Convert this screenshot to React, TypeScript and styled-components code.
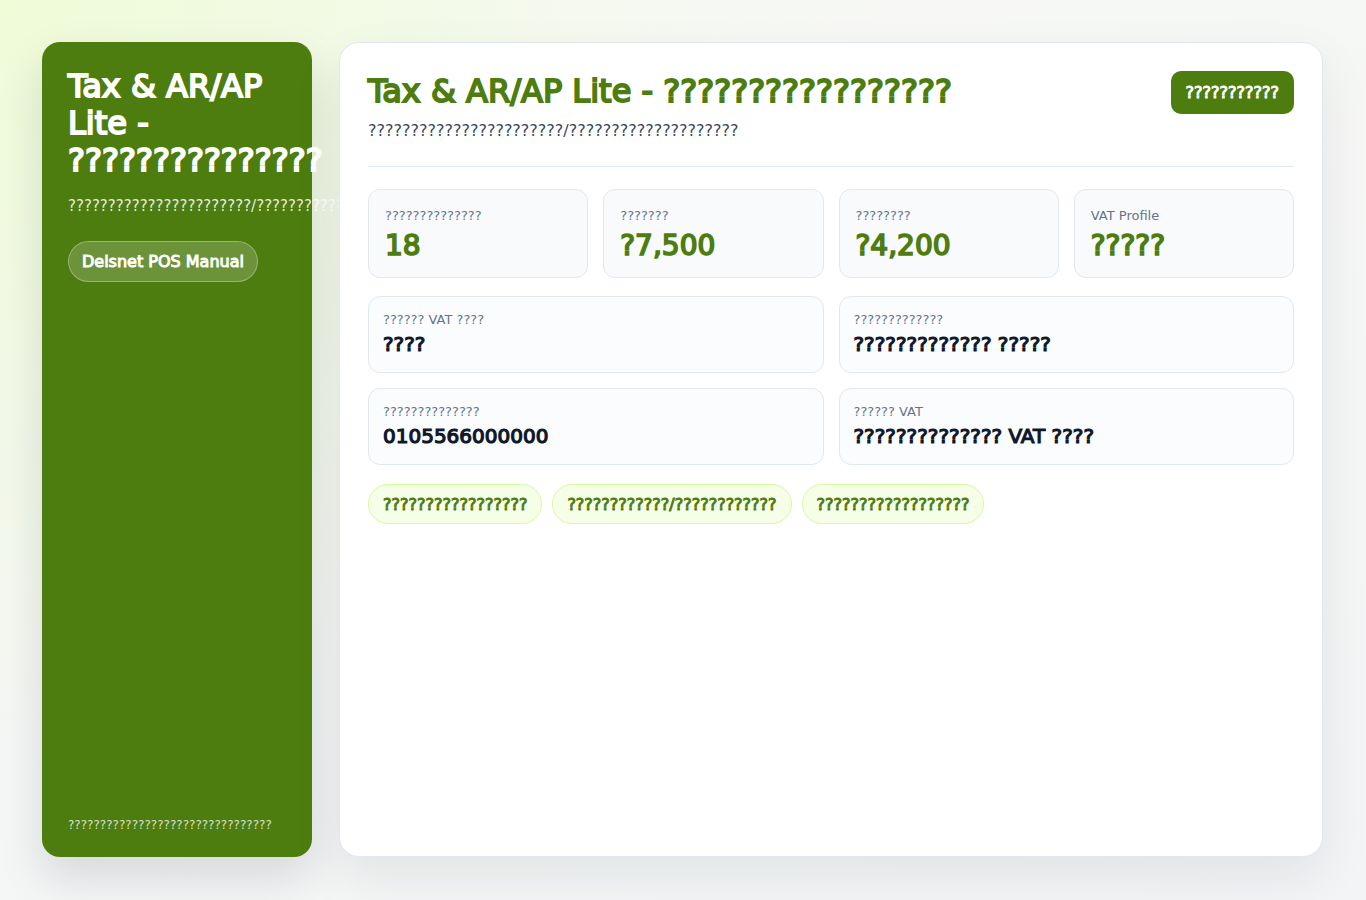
import React from "react";
import styled, { createGlobalStyle, css } from "styled-components";

const Global = createGlobalStyle`
  * { box-sizing: border-box; }
  html, body { margin: 0; padding: 0; }
  body {
    font-family: "DejaVu Sans", "Noto Sans", sans-serif;
    background:
      radial-gradient(circle at 0% 0%, rgba(236, 252, 203, 0.7) 0%, rgba(236, 252, 203, 0) 45%),
      linear-gradient(160deg, #f7f9f4 0%, #f3f4f6 100%);
    min-height: 900px;
  }
`;

/* heavy weight drawn on the regular face, as in the reference */
const heavy = css`
  font-weight: 400;
  -webkit-text-stroke: 0.06em currentColor;
`;

const Page = styled.div`
  display: flex;
  gap: 27px;
  padding: 42px 43px 43px 42px;
  height: 900px;
`;

const Sidebar = styled.aside`
  width: 270px;
  flex: none;
  background: #4d7c0f;
  border-radius: 18px;
  padding: 26px 26px 23px;
  display: flex;
  flex-direction: column;
  color: #fff;
  box-shadow: 0 20px 45px rgba(15, 23, 42, 0.13);
`;

const SideTitle = styled.h1`
  margin: 0;
  font-size: 32px;
  line-height: 37px;
  ${heavy};
`;

const SideSub = styled.p`
  margin: 16px 0 0;
  width: 271px;
  overflow: hidden;
  font-size: 15px;
  line-height: 22px;
  color: rgba(255, 255, 255, 0.88);
  white-space: nowrap;
`;

const PillLink = styled.a`
  margin-top: 24px;
  align-self: flex-start;
  padding: 0 13px;
  height: 41px;
  display: inline-flex;
  align-items: center;
  border-radius: 999px;
  background: rgba(255, 255, 255, 0.18);
  border: 1px solid rgba(255, 255, 255, 0.3);
  color: #fff;
  font-size: 16px;
  text-decoration: none;
  ${heavy};
`;

const SideFooter = styled.div`
  margin-top: auto;
  font-size: 12px;
  line-height: 18px;
  color: rgba(255, 255, 255, 0.78);
`;

const Main = styled.main`
  flex: 1;
  isolation: isolate;
  background: #fff;
  border: 1px solid #e2e8f0;
  border-radius: 20px;
  padding: 28px;
  box-shadow: 0 20px 50px rgba(15, 23, 42, 0.08);
`;

const Header = styled.header`
  display: flex;
  justify-content: space-between;
  align-items: flex-start;
  padding-bottom: 23px;
  border-bottom: 1px solid #e2e8f0;
`;

const Title = styled.h2`
  margin: 0;
  font-size: 32px;
  line-height: 41px;
  color: #4d7c0f;
  ${heavy};
`;

const Subtitle = styled.p`
  margin: 7px 0 0;
  font-size: 16px;
  line-height: 24px;
  color: #3a4658;
`;

const PrimaryButton = styled.button`
  background: #4d7c0f;
  color: #fff;
  border: none;
  border-radius: 10px;
  height: 43px;
  padding: 0 15px;
  font-family: inherit;
  font-size: 16px;
  ${heavy};
`;

const StatGrid = styled.div`
  display: grid;
  grid-template-columns: repeat(4, 1fr);
  gap: 15px;
  margin-top: 22px;
`;

const StatCard = styled.div`
  background: #f8fafc;
  border: 1px solid #e2e8f0;
  border-radius: 12px;
  padding: 17px 16px 14px;
`;

const Label = styled.div`
  font-size: 13px;
  line-height: 18px;
  color: #64748b;
`;

const StatValue = styled.div`
  margin-top: 4px;
  font-size: 28px;
  line-height: 34px;
  color: #4d7c0f;
  ${heavy};
`;

const InfoGrid = styled.div`
  display: grid;
  grid-template-columns: 1fr 1fr;
  gap: 15px;
  margin-top: 18px;
`;

const InfoCard = styled.div`
  background: #fbfcfe;
  border: 1px solid #e2e8f0;
  border-radius: 12px;
  padding: 14px 14px 15px;
`;

const InfoValue = styled.div`
  margin-top: 2px;
  font-size: 20px;
  line-height: 26px;
  color: #0f172a;
  ${heavy};
`;

const TagRow = styled.div`
  display: flex;
  gap: 10px;
  margin-top: 19px;
`;

const Tag = styled.span`
  display: inline-flex;
  align-items: center;
  height: 40px;
  padding: 0 14px;
  border-radius: 999px;
  background: #f7fee7;
  border: 1px solid #d9f99d;
  color: #4d7c0f;
  font-size: 16px;
  ${heavy};
`;

const q = (n: number) => "?".repeat(n);

const stats = [
  { label: q(14), value: "18" },
  { label: q(7), value: "?7,500" },
  { label: q(8), value: "?4,200" },
  { label: "VAT Profile", value: q(5) },
];

const infos = [
  { label: `${q(6)} VAT ${q(4)}`, value: q(4) },
  { label: q(13), value: `${q(13)} ${q(5)}` },
  { label: q(14), value: "0105566000000" },
  { label: `${q(6)} VAT`, value: `${q(14)} VAT ${q(4)}` },
];

const tags = [q(17), `${q(12)}/${q(12)}`, q(18)];

const subText = `${q(23)}/${q(20)}`;

export default function App() {
  return (
    <>
      <Global />
      <Page>
        <Sidebar>
          <SideTitle>{`Tax & AR/AP Lite - ${q(15)}`}</SideTitle>
          <SideSub>{subText}</SideSub>
          <PillLink href="#">Delsnet POS Manual</PillLink>
          <SideFooter>{q(32)}</SideFooter>
        </Sidebar>
        <Main>
          <Header>
            <div>
              <Title>{`Tax & AR/AP Lite - ${q(17)}`}</Title>
              <Subtitle>{subText}</Subtitle>
            </div>
            <PrimaryButton>{q(11)}</PrimaryButton>
          </Header>
          <StatGrid>
            {stats.map((s, i) => (
              <StatCard key={i}>
                <Label>{s.label}</Label>
                <StatValue>{s.value}</StatValue>
              </StatCard>
            ))}
          </StatGrid>
          <InfoGrid>
            {infos.map((it, i) => (
              <InfoCard key={i}>
                <Label>{it.label}</Label>
                <InfoValue>{it.value}</InfoValue>
              </InfoCard>
            ))}
          </InfoGrid>
          <TagRow>
            {tags.map((t, i) => (
              <Tag key={i}>{t}</Tag>
            ))}
          </TagRow>
        </Main>
      </Page>
    </>
  );
}
